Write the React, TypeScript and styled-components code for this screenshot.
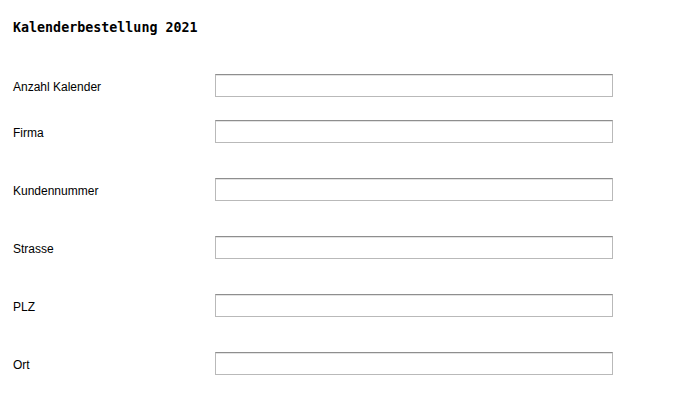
import React from "react";
import styled, { createGlobalStyle } from "styled-components";

const Global = createGlobalStyle`
  html, body { margin: 0; padding: 0; background: #ffffff; }
  body { font-family: "Liberation Sans", Arial, sans-serif; }
`;

const Page = styled.div`
  padding: 20px 0 0 13px;
`;

const Title = styled.h1`
  margin: 0 0 38px 0;
  font-family: "DejaVu Sans Mono", "Liberation Mono", monospace;
  font-weight: bold;
  font-size: 13.33px;
  line-height: 16px;
  color: #000;
`;

const Form = styled.form`
  display: flex;
  flex-direction: column;
`;

const Row = styled.div<{ $gap: number }>`
  display: grid;
  grid-template-columns: 202px 398px;
  align-items: center;
  margin-bottom: ${(p) => p.$gap}px;
`;

const Label = styled.label`
  font-family: "Liberation Sans", Arial, sans-serif;
  font-size: 12px;
  line-height: 14px;
  color: #000;
  padding-top: 3px;
`;

const Input = styled.input`
  box-sizing: border-box;
  width: 398px;
  height: 23px;
  margin: 0;
  padding: 0 3px;
  border: 1px solid #b9b9b9;
  border-top-color: #8e8e8e;
  box-shadow: inset 0 1px 0 #e3e3e3;
  background: #fff;
  font-family: "Liberation Sans", Arial, sans-serif;
  font-size: 12px;
  outline: none;
`;

const fields = [
  { label: "Anzahl Kalender", gap: 23 },
  { label: "Firma", gap: 35 },
  { label: "Kundennummer", gap: 35 },
  { label: "Strasse", gap: 35 },
  { label: "PLZ", gap: 35 },
  { label: "Ort", gap: 0 },
];

export default function App() {
  return (
    <>
      <Global />
      <Page>
        <Title>Kalenderbestellung 2021</Title>
        <Form>
          {fields.map((f, i) => (
            <Row key={f.label} $gap={f.gap}>
              <Label htmlFor={`f${i}`}>{f.label}</Label>
              <Input id={`f${i}`} type="text" />
            </Row>
          ))}
        </Form>
      </Page>
    </>
  );
}
